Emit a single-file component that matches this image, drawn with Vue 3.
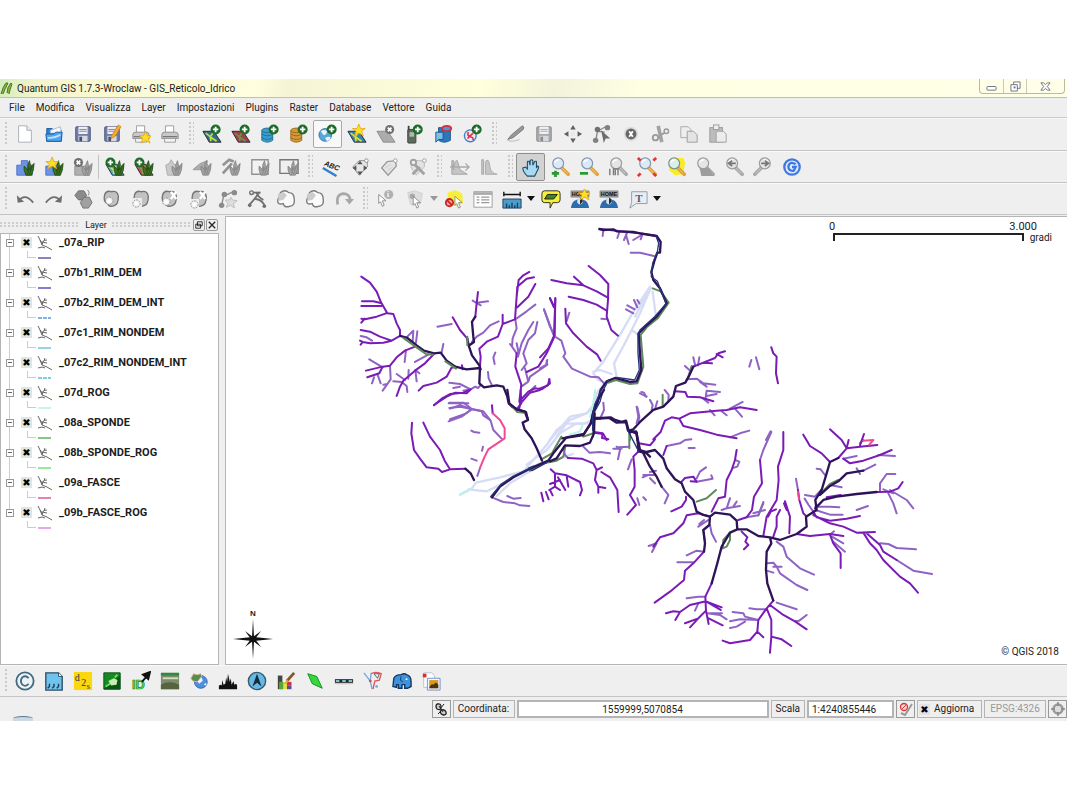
<script setup>
import { ref } from "vue";

const menus = [
  "File",
  "Modifica",
  "Visualizza",
  "Layer",
  "Impostazioni",
  "Plugins",
  "Raster",
  "Database",
  "Vettore",
  "Guida",
];

// shared pieces of the toolbar icons
const badge = (x, y, c = "#1d6b27") =>
  `<circle cx="${x}" cy="${y}" r="5.500" fill="${c}"/><path d="M${x - 3} ${y}h6M${x} ${y - 3}v6" stroke="#fff" stroke-width="2"/>`;
const cross = (x, y) =>
  `<circle cx="${x}" cy="${y}" r="5" fill="#6f6f6f"/><path d="M${x - 2} ${y - 2}l4 4M${x + 2} ${y - 2}l-4 4" stroke="#fff" stroke-width="2"/>`;
const star = (x, y) =>
  `<path transform="translate(${x} ${y})" d="M0-7L2-2 7-2 3 1 5 6 0 3-5 6-3 1-7-2-2-2z" fill="#ffdf20" stroke="#dfa010" stroke-width=".8"/>`;
const grass = (c, s) =>
  `<path d="M12 20Q9 14 10 10Q13 12 14 15Q13 8 16 4Q18 9 16 14Q18 9 21 7Q21 15 18 20z" fill="${c}" stroke="${s}" stroke-width=".8"/><path d="M14 19l1-8M16 19l3-9" stroke="${s}" stroke-width=".8"/>`;
const greenGrass = grass("#3c7420", "#1f4512");
const grayGrass = grass("#a2a2a2", "#7d7d7d");
const lens = (fill, rim, handle) =>
  `<path d="M13 12l7 7" stroke="${handle}" stroke-width="4" stroke-linecap="round"/><path d="M13 12l6 6" stroke="#fff" stroke-opacity=".4"/><circle cx="9" cy="7" r="6" fill="${fill}" stroke="${rim}" stroke-width="1.3"/><path d="M5 6q2-3 5-3" stroke="#fff" stroke-width="1.5" fill="none"/>`;
const blueLens = lens("#d9e9fa", "#8796a8", "#e3a53a");
const grayLens = lens("#e4e4e4", "#9c9c9c", "#a9a9a9");
const floppy = (body, edge) =>
  `<rect x="3" y="3" width="16" height="16" rx="1" fill="${body}" stroke="${edge}"/><rect x="6" y="3" width="10" height="8" fill="#eef0f4"/><path d="M7 6h8M7 8h8" stroke="${edge}" stroke-width=".7"/><rect x="6" y="13" width="10" height="6" fill="#d5d8e0"/><rect x="7" y="14" width="3" height="5" fill="${edge}"/>`;
const printer =
  '<path d="M6 9V2h9v7" fill="#fff" stroke="#999"/><path d="M2 12q0-3 3-3h12q3 0 3 3v4H2z" fill="#c9c9c9" stroke="#8a8a8a"/><path d="M3 14h16" stroke="#555"/><path d="M5 16h12v4H5z" fill="#f4f4f4" stroke="#9a9a9a"/>';
const database = (c, e) =>
  `<path d="M2 7v11q6 4 12 0V7" fill="${c}" stroke="${e}"/><ellipse cx="8" cy="7" rx="6" ry="2.500" fill="${c}" stroke="${e}"/><path d="M2 11q6 4 12 0M2 15q6 4 12 0" fill="none" stroke="${e}"/>`;
const raster = (c, l) =>
  `<path d="M1 8h12l8 12H8z" fill="${c}" stroke="#223"/><path d="M4 10l5 4 1 5M9 14l3-4M9 14l7 5" stroke="${l}" stroke-width="1.800" fill="none"/>`;
const blob = (x) =>
  `<path d="M${x} 6q2-5 7-3 7-2 8 5 0 9-4 10-6 3-8-2-5-2-3-10z" fill="#c2c2c2" stroke="#747474" stroke-width="1.500"/>`;
const spark = (x, y) =>
  `<circle cx="${x}" cy="${y}" r="4" fill="#f2f2f2" stroke="#8a8a8a" stroke-dasharray="2 1"/><path d="M${x - 2} ${y}h4M${x} ${y - 2}v4" stroke="#fff" stroke-width="2"/>`;
const cursor = (x, y, c = "#fff") =>
  `<path transform="translate(${x} ${y})" d="M0 0l8 7-4 0 2 5-2 1-2-5-2 2z" fill="${c}" stroke="#8a8a8a"/>`;
const home =
  '<path d="M1 2h20v7H1z" fill="#9a9a9a" stroke="#777" stroke-width=".6"/><text x="2" y="8" font-size="6" font-weight="700" font-family="Liberation Sans" fill="#111">HOME</text><path d="M1 21q1-8 6-9l4-3 4 3q5 1 6 9z" fill="#2d6dae"/><path d="M8 11q3-3 6 0v4q-3 4-6 0z" fill="#dbe3ec"/><path d="M11 10q3 0 3 4l-3 3z" fill="#25282c"/>';

const icons = {
  newProject:
    '<path d="M4 2h9l5 5v13H4z" fill="#fff" stroke="#a3acb8"/><path d="M13 2v5h5" fill="#e2e8ef" stroke="#a3acb8"/>',
  open: '<path d="M3 5h6l2 2h8v12H3z" fill="#2e7fd6" stroke="#1c5ba5"/><path d="M7 7l11-4 1 7H7z" fill="#f6f8fa" stroke="#a9b9cc"/><path d="M2 11h9l2-2h7l-1 10H3z" fill="#4ea4ef" stroke="#1c5ba5"/><path d="M4 15q7 1 14-3" stroke="#bfe2ff" stroke-width="2" fill="none"/>',
  save: floppy("#737fa8", "#454f75"),
  saveAs:
    floppy("#737fa8", "#454f75") +
    '<path d="M18 1l3 2-7 11-4 2 1-4z" fill="#f4a92e" stroke="#c97c12" stroke-width=".7"/>',
  composer: printer + star(16, 15),
  print: printer,
  addVector: raster("#2d6f86", "#c6dd4a") + badge(15, 6),
  addRaster: raster("#a23f46", "#6f8f50") + badge(15, 6),
  postgis: database("#3c9ccb", "#1d6c96") + badge(15, 6),
  spatialite: database("#d59a35", "#98651a") + badge(15, 6),
  wms:
    '<circle cx="8" cy="12" r="7" fill="#5ba6d8" stroke="#3577ad"/><path d="M3 8q4-3 7 0-1 5-4 4zM8 15q5-2 6 0-2 5-5 3z" fill="#e9f3f8"/>' +
    badge(15, 6),
  newShape: raster("#3a86a6", "#d5df35") + star(13, 7),
  removeLayer:
    '<path d="M1 8h12l8 12H8z" fill="#acacac" stroke="#8a8a8a"/>' + cross(15, 6),
  gps:
    '<rect x="3" y="6" width="9" height="15" rx="1" fill="#5d6a5e" stroke="#3d463e"/><rect x="5" y="9" width="5" height="5" fill="#a8c0a6"/><path d="M4 2v5" stroke="#3d463e" stroke-width="2"/>' +
    badge(14, 6),
  oracle:
    '<path d="M5 4v14q6 4 13 0V4z" fill="#2a78bd" stroke="#17508a"/><ellipse cx="14" cy="5" rx="5" ry="3" fill="#4b98d6" stroke="#d22e3b" stroke-width="2"/><path d="M2 9h8v8H5l-3 3z" fill="#7fc0ea" stroke="#17508a"/>',
  wfs:
    '<circle cx="8" cy="13" r="6.500" fill="#f3e6ee" stroke="#3e7fd0" stroke-width="1.500"/><path d="M5 16l6-6M6 9q-2 4 2 5t3 4" stroke="#d8344c" stroke-width="1.800" fill="none"/>' +
    badge(15, 6),
  pencil:
    '<path d="M19 2q3 1 1 4L9 15l-6 2 4-5z" fill="#989898" stroke="#777"/><path d="M3 18q6 2 13-1" stroke="#c8c8c8" stroke-width="1.500" fill="none"/>',
  saveEdits: floppy("#a9a9a9", "#8c8c8c"),
  move: '<path d="M11 1l3 5H8zM11 21l3-5H8zM1 11l5-3v6zM21 11l-5-3v6z" fill="#606060"/><path d="M9 9h4v4H9z" fill="#e8e8e8"/>',
  node: '<path d="M4 19L6 8l9-5M6 8l8 1" stroke="#8b8b8b" stroke-width="1.500" fill="none"/><circle cx="6" cy="6" r="3" fill="#707070"/><circle cx="17" cy="4" r="3" fill="#808080"/><circle cx="4" cy="18" r="3" fill="#808080"/><path d="M10 7l10 9-5 0-2 5z" fill="#6c6c6c"/>',
  deleteSel:
    '<circle cx="11" cy="11" r="8" fill="#ddd"/><circle cx="11" cy="11" r="6" fill="#666"/><path d="M9 8l4 6M13 8l-4 6" stroke="#fff" stroke-width="2"/>',
  cut: '<path d="M9 2l4 18" stroke="#a2a2a2" stroke-width="4"/><path d="M12 12l5-3" stroke="#9a9a9a" stroke-width="2"/><circle cx="18" cy="8" r="2.500" fill="#eee" stroke="#9a9a9a" stroke-width="1.500"/><circle cx="6" cy="15" r="3" fill="#eee" stroke="#9a9a9a" stroke-width="2"/>',
  copy: '<path d="M2 3h8l3 3v9H2z" fill="#eee" stroke="#a6a6a6"/><path d="M9 8h7l4 4v8H9z" fill="#e3e3e3" stroke="#9a9a9a"/>',
  paste:
    '<rect x="2" y="4" width="14" height="16" fill="#bcbcbc" stroke="#9a9a9a"/><rect x="6" y="1" width="6" height="5" fill="#eee" stroke="#9a9a9a"/><path d="M9 8h8l3 3v9H9z" fill="#ececec" stroke="#a0a0a0"/>',

  folder:
    '<path d="M2 9h5V4h7v5h5v11H2z" fill="#6d93e6" stroke="#4b6fc4"/>' + greenGrass,
  folderStar:
    '<path d="M2 10h16v10H2z" fill="#6d93e6" stroke="#4b6fc4"/>' + greenGrass + star(9, 7),
  folderClose:
    '<path d="M2 10h16v10H2z" fill="#b0b0b0" stroke="#909090"/>' + grayGrass + cross(6, 6),
  grassVector: raster("#47a8c6", "#e0e34d") + greenGrass + badge(6, 6),
  grassRaster: raster("#b85158", "#8c9a50") + greenGrass + badge(6, 6),
  grassNew:
    '<path d="M3 9l4-2 2-4 3 5 5 1v11H5z" fill="#c9c9c9" stroke="#aaa"/>' + grayGrass,
  grassEdit: '<path d="M1 14Q8 6 17 4l-4 10z" fill="#acacac" stroke="#999"/>' + grayGrass,
  grassTools:
    '<path d="M2 9l7-6 5 2M2 18L12 7" fill="none" stroke="#939393" stroke-width="3"/>' + grayGrass,
  grassRegion:
    '<path d="M2 3h18v16H2z" fill="#f2f2f2" stroke="#929292" stroke-width="1.500"/>' + grayGrass,
  grassRegionEdit:
    '<path d="M1 3h20v15H1z" fill="#efefef" stroke="#777" stroke-width="1.500"/>' + grayGrass,
  abc: '<path d="M2 12l15 9" stroke="#2d7fd2" stroke-width="2.500"/><text x="3" y="9" transform="rotate(22 3 9)" font-size="8" font-style="italic" font-weight="700" font-family="Liberation Sans" fill="#222">ABC</text>',
  labelMove:
    '<path d="M3 11l7-7h9v7l-9 9z" fill="#e6e6e6" stroke="#8a8a8a"/><path d="M11 4l3 4H8zM11 20l3-4H8zM3 12l4-3v6zM19 12l-4-3v6z" fill="#555"/><circle cx="18" cy="4" r="2" fill="#fff" stroke="#888"/>',
  labelRotate:
    '<path d="M3 12l6-7 9-1 1 6-9 10z" fill="#e4e4e4" stroke="#999" stroke-width="1.500"/><path d="M7 12l6-4M9 15l6-4" stroke="#ccc"/><circle cx="18" cy="4" r="2" fill="#fff" stroke="#999"/>',
  labelTools:
    '<path d="M3 11l6-7h9v7l-9 9z" fill="#e2e2e2" stroke="#bbb"/><path d="M7 8l11 11M5 19l8-8" fill="none" stroke="#a2a2a2" stroke-width="3"/><circle cx="6" cy="6" r="3" fill="#eee" stroke="#a2a2a2" stroke-width="2"/><circle cx="18" cy="4" r="2" fill="#fff" stroke="#999"/>',
  histStretch:
    '<path d="M2 19V4h2v8q2-10 4-8l3 10 8 5z" fill="#c5c5c5" stroke="#a3a3a3"/><path d="M1 11h20M17 7l4 4-4 4M5 8l-4 3 4 3" stroke="#aaa" stroke-width="1.500" fill="none"/>',
  histFull:
    '<path d="M3 19V3h2v16zM7 19V5q4-5 5 6 1 7 8 8z" fill="#c5c5c5" stroke="#a8a8a8"/>',
  pan: '<path d="M7 21q-5-5-5-9l3-1 2 2V6q0-2 2-1l1 4V4q2-2 3 0v5l2-4q2-1 2 1v6l1-2q2 0 1 3l-4 8z" fill="#a9d9f2" stroke="#234b66" stroke-width="1.200"/>',
  zoomIn: blueLens + '<path d="M6 15v7M2 18h8" stroke="#2b9a33" stroke-width="3"/>',
  zoomOut: blueLens + '<path d="M1 18h9" stroke="#2b9a33" stroke-width="3"/>',
  zoomNative: grayLens + '<path d="M2 20v-7M6 20v-7h5v7M8 14v6" stroke="#777" stroke-width="1.500" fill="none"/>',
  zoomFull:
    blueLens +
    '<path d="M1 1l3 3M21 1l-3 3M1 21l3-3M21 21l-3-3" stroke="#e33434" stroke-width="3"/>',
  zoomSel:
    '<path d="M8 1h11l2 5-2 13-9 1-7-6z" fill="#f7ec27"/>' +
    lens("#dbeee8", "#7d9286", "#dfa034"),
  zoomLayer: grayLens + '<path d="M5 12h10l6 9H7z" fill="#9d9d9d"/>',
  zoomLast: grayLens + '<path d="M13 7H6M9 4L5 7l4 3" stroke="#777" stroke-width="2" fill="none"/>',
  zoomNext:
    '<g transform="matrix(-1 0 0 1 22 0)">' + grayLens + '</g><path d="M9 7h7M13 4l4 3-4 3" stroke="#777" stroke-width="2" fill="none"/>',
  refresh:
    '<circle cx="11" cy="11" r="8.500" fill="#dfe9fb" stroke="#4078e0" stroke-width="2.500"/><path d="M15 8q-6-4-8 2 0 6 6 5l2-4h-4" fill="none" stroke="#3d77df" stroke-width="2.500"/>',

  undo: '<path d="M4 13q7-9 16 2" fill="none" stroke="#6e6e6e" stroke-width="2"/><path d="M2 7l1 8 7-1z" fill="#6e6e6e"/>',
  redo: '<path d="M18 13Q11 4 2 15" fill="none" stroke="#6e6e6e" stroke-width="2"/><path d="M20 7l-1 8-7-1z" fill="#6e6e6e"/>',
  simplify:
    '<path d="M2 7l4-5h6l3 5-3 5H6z" fill="#8b8b8b" stroke="#707070"/><path d="M8 15l4-6h6l3 6-4 6h-6z" fill="#a0a0a0" stroke="#707070"/><path d="M16 1q3 2 1 6" stroke="#888" fill="none"/>',
  addRing: blob(3) + spark(8, 13),
  addPart: blob(4) + '<path d="M0 10h12v12H0z" fill="#efefef"/>' + spark(6, 16),
  delRing: blob(3) + spark(7, 14) + '<path d="M12 3l6 8M18 3l-6 8" stroke="#fff" stroke-width="2.500"/>',
  delPart: blob(4) + '<path d="M0 11h11v11H0z" fill="#efefef"/>' + spark(6, 17) + '<path d="M12 3l6 8M18 3l-6 8" stroke="#fff" stroke-width="2.500"/>',
  reshape:
    '<path d="M4 18L6 8l11-5" stroke="#8b8b8b" stroke-width="1.500" fill="none"/><circle cx="7" cy="6" r="3" fill="#8b8b8b"/><circle cx="18" cy="4" r="3" fill="#8b8b8b"/><circle cx="4" cy="18" r="3" fill="#8b8b8b"/><path d="M14 9l2 3 5 1-4 3 1 5-4-3-5 2 2-4-3-4h5z" fill="#ddd" stroke="#bbb"/>',
  split:
    '<circle cx="5" cy="4" r="2" fill="none" stroke="#707070" stroke-width="1.500"/><path d="M7 4h8M10 3q2 6 8 9M14 3Q8 12 2 18M9 11q7 0 11 8" stroke="#707070" stroke-width="2" fill="none"/><circle cx="3" cy="18" r="2" fill="#707070"/><circle cx="19" cy="19" r="2" fill="#707070"/>',
  merge:
    '<path d="M5 4q5-4 9 0 6 0 6 7 1 8-5 8-6 2-7-3-7 2-6-4z" fill="#fafafa" stroke="#7a7a7a" stroke-width="1.500"/><path d="M2 6l6-3 4 4-4 5-5 1z" fill="#ccc"/>',
  rotate:
    '<path d="M4 17Q2 6 10 5q7 0 8 7" fill="none" stroke="#a8a8a8" stroke-width="3"/><path d="M12 11h10l-5 6z" fill="#a8a8a8"/>',
  identify:
    cursor(3, 6) +
    '<circle cx="14" cy="6" r="5" fill="#b0b0b0"/><text x="12" y="9" font-size="8" font-weight="700" font-family="Liberation Serif" fill="#fff">i</text>',
  select:
    '<path d="M3 4l8-2 8 3-2 11-11 1z" fill="#dedede" stroke="#d0d0d0"/><circle cx="8" cy="8" r="3" fill="#aaa"/>' +
    cursor(9, 8),
  deselect:
    '<path d="M4 4l8-3 8 4 1 10-7 4-10-3z" fill="#f7ef3a"/>' +
    cursor(12, 8) +
    '<circle cx="6" cy="15" r="4" fill="#f4b0a0" stroke="#cf2020" stroke-width="2"/><path d="M3 12l6 6" stroke="#cf2020" stroke-width="2"/>',
  attributes:
    '<rect x="1" y="3" width="20" height="17" fill="#fff" stroke="#999"/><path d="M1 5h20" stroke="#aaa" stroke-width="3"/><path d="M4 9h3M9 9h9M4 12h3M9 12h9M4 15h3M9 15h9" stroke="#999" stroke-width="1.500"/>',
  measure:
    '<path d="M2 3v5M20 3v5M2 6h18" stroke="#111" stroke-width="1.500"/><path d="M1 11h20v10H1z" fill="#4e9cc9" stroke="#193c58"/><path d="M5 21v-5M8 21v-3M11 21v-6M14 21v-3M17 21v-6" stroke="#153f63" stroke-width="1.500"/>',
  tips: '<path d="M4 2h14q3 0 3 3v7q0 3-3 3h-5l-3 6v-6H4q-3 0-3-3V5q0-3 3-3z" fill="#f5ef3c" stroke="#222"/><path d="M7 6h11l-4 5H4z" fill="#46821f" stroke="#1b1b1b"/>',
  newBookmark: home + star(16, 6),
  bookmarks: home,
  annotation:
    '<path d="M4 3h17v13H9l-7 5 2-6z" fill="#e7edf3" stroke="#8d98a3"/><text x="8" y="14" font-size="12" font-weight="700" font-family="Liberation Serif" fill="#5a646e">T</text>',

  copyright:
    '<circle cx="11" cy="11" r="9.500" fill="#eef3f6" stroke="#436a80" stroke-width="2"/><path d="M15 8q-3-4-7-1-3 4 0 8 4 3 7-1" fill="none" stroke="#436a80" stroke-width="2"/>',
  textPlugin:
    '<path d="M2 2h14l4 4v15H2z" fill="#6fc4ee" stroke="#2f4c63" stroke-width="1.500"/><path d="M16 2v4h4" fill="#fff" stroke="#2f4c63"/><path d="M6 14v3l-2 2M11 14v3l-2 2M16 14v3l-2 2" stroke="#1c3a55" fill="none" stroke-width="1.500"/>',
  dxf: '<path d="M1 1h20v20H1z" fill="#f9d810"/><text x="2" y="11" font-size="11" font-family="Liberation Serif" fill="#333">d</text><text x="9" y="16" font-size="11" font-family="Liberation Serif" fill="#333">2</text><text x="15" y="20" font-size="9" font-family="Liberation Serif" fill="#333">s</text>',
  evis:
    '<path d="M2 2h18v18H2z" fill="#158a22" stroke="#064a12"/><path d="M2 20L20 5v15z" fill="#0a5617"/><path d="M7 11l6-3 4 2-1 5-6 1z" fill="#c9ecb0"/><path d="M14 7l3-3M4 17l5-3" stroke="#6be35a" stroke-width="2"/>',
  hd: '<text x="1" y="20" font-size="14" font-weight="700" font-family="Liberation Sans" fill="#6ee565" stroke="#158a1a" stroke-width=".8">ID</text><path d="M12 12l6-7M13 4l8-3-2 8z" fill="#111" stroke="#111" stroke-width="2"/>',
  field:
    '<path d="M1 2h20v18H1z" fill="#7d8b6c"/><path d="M1 2h20v3H1z" fill="#2e8b3c"/><path d="M3 7h17v2H3z" fill="#cfe0c4"/><path d="M1 15q9-5 20 0v5H1z" fill="#55633f"/>',
  globe:
    '<circle cx="13" cy="12" r="7" fill="#4f8fe0" stroke="#3763a8"/><path d="M11 6q4 1 4 5l-4 3-2-4zM16 15l3-2v3z" fill="#eaf6ff"/><path d="M2 8l3-5 4 1 4-1 1 3-5 6-5-1z" fill="#5b8a56" stroke="#d9c29a"/>',
  histogram:
    '<path d="M1 20v-4l2-1 1 1 1-6 1 5 2-1 1-7 1 5 1-9 2 9 1-4 1 7 2-4 1 4 2-1 1 2v4z" fill="#111"/>',
  north:
    '<circle cx="11" cy="11" r="9.500" fill="#68b9e2" stroke="#33586f" stroke-width="1.500"/><path d="M11 3l5 14-5-4-5 4z" fill="#132c3e"/>',
  style:
    '<path d="M2 5h5v15H2z" fill="#444"/><path d="M4 12h13v8H4z" fill="#e9e142"/><path d="M4 12h4v8H4z" fill="#57a83c"/><path d="M12 12h5v4h-5z" fill="#cf3040"/><path d="M12 16h5v4h-5z" fill="#604a98"/><path d="M20 2l-8 9" stroke="#8a5426" stroke-width="3"/><path d="M13 9l-5 6 6-3z" fill="#e09a50"/>',
  polygon:
    '<path d="M3 3l10 3 6 13-11-5z" fill="#34d83a" stroke="#128a1a"/>',
  scalebar:
    '<path d="M1 9h20v4H1z" fill="#222"/><path d="M2 10h4v2H2zM9 10h4v2H9zM16 10h4v2h-4z" fill="#7fc0cf"/><path d="M1 14h20" stroke="#bbb"/>',
  roadgraph:
    '<path d="M1 2l7 9 2 9M9 2l-1 9" stroke="#79a8e0" stroke-width="1.500" fill="none"/><path d="M9 3q4-3 11 0l-2 7-5 1-2 9" stroke="#de5560" stroke-width="1.500" fill="none"/><path d="M12 3h6l-2 5z" fill="none" stroke="#555"/><circle cx="8" cy="11" r="1.500" fill="#d44"/><circle cx="15" cy="17" r="1.500" fill="#79a8e0"/>',
  postgres:
    '<path d="M1 17l1-9q2-4 8-4 4-2 6 0 5 1 5 8v5l-4 2h-3v-4h-3v4H7v-4H5v3z" fill="#3f93dc" stroke="#12365e" stroke-width="1.500"/><circle cx="16" cy="9" r="1" fill="#fff"/><path d="M10 6q-2 5 2 6" fill="none" stroke="#12365e"/>',
  imagePlugin:
    '<path d="M3 2h9l3 3v13H3z" fill="#fff" stroke="#b5bdd0"/><path d="M2 3h4v4H2z" fill="#e02a2a"/><path d="M7 8h14v13H7z" fill="#f2f5fb" stroke="#6b8bd0"/><path d="M9 10h10v9H9z" fill="#d99a1c"/><path d="M9 19q2-6 5-4 2-4 5 0v4z" fill="#4a3510"/>',
};

const toolbars = [
  [
    ["newProject", "open", "save", "saveAs", "composer", "print"],
    ["addVector", "addRaster", "postgis", "spatialite", "wms", "newShape", "removeLayer", "gps", "oracle", "wfs"],
    ["pencil", "saveEdits", "move", "node", "deleteSel", "cut", "copy", "paste"],
  ],
  [
    ["folder", "folderStar", "folderClose", "|", "grassVector", "grassRaster", "grassNew", "grassEdit", "grassTools", "grassRegion", "grassRegionEdit"],
    ["abc", "labelMove", "labelRotate", "labelTools"],
    ["histStretch", "histFull"],
    ["pan", "zoomIn", "zoomOut", "zoomNative", "zoomFull", "zoomSel", "zoomLayer", "zoomLast", "zoomNext", "refresh"],
  ],
  [
    ["undo", "redo", "simplify", "addRing", "addPart", "delRing", "delPart", "reshape", "split", "merge", "merge", "rotate"],
    ["identify", "select", "v", "deselect", "attributes", "measure", "V", "tips", "newBookmark", "bookmarks", "annotation", "V"],
  ],
];

const pluginTools = [
  "copyright", "textPlugin", "dxf", "evis", "hd", "field", "globe", "histogram",
  "north", "style", "polygon", "scalebar", "roadgraph", "postgres", "imagePlugin",
];

const layers = ref([
  { name: "_07a_RIP", color: "#6a5aa8", on: true },
  { name: "_07b1_RIM_DEM", color: "#5a52c0", on: true },
  { name: "_07b2_RIM_DEM_INT", color: "#5a96e0", dash: "4 1", on: true },
  { name: "_07c1_RIM_NONDEM", color: "#72c4e6", on: true },
  { name: "_07c2_RIM_NONDEM_INT", color: "#55bfdc", dash: "4 1", on: true },
  { name: "_07d_ROG", color: "#b5f0ea", on: true },
  { name: "_08a_SPONDE", color: "#58b858", on: true },
  { name: "_08b_SPONDE_ROG", color: "#74e074", on: true },
  { name: "_09a_FASCE", color: "#d85a98", on: true },
  { name: "_09b_FASCE_ROG", color: "#dc8ce0", on: true },
]);

const coordinate = ref("1559999,5070854");
const scale = ref("1:4240855446");
const render = ref(true);

// river network, one sheet per survey area, three units to a pixel
const sheets = [
  {
    x: 350,
    y: 220,
    lines: {
      minor:
        "M32 348L50 352 66 362M172 350L188 334M188 364L190 332M198 368L202 334M58 418L98 442M66 490L72 472M92 490L82 462M120 437L122 478 98 512M112 492L100 494M168 390L164 426M195 426L235 404M275 398L280 372M130 484L155 486 170 498 172 516M140 462L165 480M175 476L176 450M200 484L196 450 208 460M262 320L305 312M380 248L414 244M368 242L392 256M366 366L380 350 400 338 420 316 446 304M496 298L530 274 556 254M496 298L500 325 488 355 486 380 500 400M504 410L515 370 535 330 550 306M515 450L530 430 520 400 535 360 555 340 562 306M500 370L506 400M480 372L490 385M582 268L600 320 614 348M514 500L535 485 540 470 592 434 590 422M535 485L525 445M540 514L556 498M436 398L430 412 434 432M414 456L416 475 426 496M298 488L330 492 362 508 340 512M310 504L330 500M362 508L376 500 384 504 392 496M296 550L355 550M300 566L330 556 365 568 395 574 400 586 420 600M300 598L345 582 365 568",
      main: "M34 170L60 188 80 215 93 247 112 280 130 282 140 310 150 330 150 348M36 244H70L92 249M34 258H94M34 296L45 298 80 290 108 280M34 308L44 296M32 330L60 335 90 350 125 362 150 348M30 362L38 366 60 370 100 368 125 362M32 374L38 366M195 380L165 392 140 412 120 437 98 440 48 452M98 440L88 460 52 472M252 402L225 430 195 452 160 482 150 500 140 528M206 512L220 498 260 488 290 470 304 444 316 440M338 448L336 436M308 292L330 330 352 356M376 290L380 250 384 216M458 284L458 312 444 350 412 364 388 386 392 410 390 440M458 312L495 298 500 230 506 180 520 166 538 156M500 230L502 200 530 176 552 172M502 262L535 230 556 192M500 400L496 440 514 494 508 545M600 236L612 262M616 234L614 348 590 400 565 440 530 456M508 565L512 540 535 515 555 505 575 508 600 490 598 478M252 555L290 530 316 518 350 520 362 508",
      dark: "M150 348L172 354 200 376 222 392 252 400 272 398 290 422 316 440 350 448 390 444M352 356L356 376 366 406 388 436 392 448M358 376L372 366 370 350 366 306 376 290M390 444L388 490 402 502 440 496 460 500 472 530 476 550 486 560 506 570 524 574 534 600",
      bank: "M160 354L205 386 228 402 250 404M352 350L352 376M286 424L318 446",
    },
  },
  {
    x: 540,
    y: 220,
    lines: {
      pale: "M330 200L280 275 240 345 190 425 160 460M332 205L300 280 275 330 252 375 222 430 230 470M275 330L292 342M338 215L348 290M160 460L175 480 195 488 170 520 165 550 140 580 90 590 60 625 30 660M156 600L130 612 80 610 50 650M160 455L180 450 215 462M325 210L285 290",
      bank: "M338 205L362 214 386 248 354 294 322 320 302 345 310 440 292 490 270 492 228 480 206 488M160 580L160 640 130 650M368 556L368 524M270 636V660M455 438L445 470",
      minor:
        "M190 30L188 48M238 36L232 54M262 36L252 60M258 44L266 72M280 60L300 48 308 42M302 58L308 42M272 98L300 98 342 108M184 296L202 298M88 278L80 304M42 348L64 362 76 400 70 410 96 446 150 470 176 472 192 490M12 268L42 348M0 445L18 435 22 420M180 597L192 570 190 548M435 438L448 450M460 412L466 438M478 412L474 436M295 606L298 590 292 562M335 570L338 555 330 540M345 568L352 544M385 545L386 525 374 510M304 516L312 518 318 530M440 478L470 476 490 490 526 494M480 486L500 500M496 540L500 512 540 516M500 528L530 522M490 536L505 548M510 570L524 586M545 574L560 586M570 566L608 546M585 566L606 590M570 652L600 640 628 632M678 660L692 634M628 440L634 420M648 412L658 448M258 268L280 280M262 256L284 268M282 240L292 262M292 240L298 250",
      main: "M34 180L80 190 130 196 170 214 205 234M102 170L130 196M146 138L180 165 205 192 204 240 200 290 214 330 234 347M86 230L130 240 170 254 200 272M76 266L78 310 100 340 140 380 172 404 182 422M0 412L25 385 42 348M30 234L42 260M46 236L42 348M0 505L24 496 28 478M460 440L490 428 516 430M460 440L525 414 535 400 555 394M530 402L548 412M340 658L362 636 375 602 395 592 418 596 450 580 490 576 530 572 560 570 600 562 650 570M418 596L430 618 480 630 530 644 590 655M694 382L700 400 710 410 708 460 714 490M162 638L190 642 200 660M404 514L436 516 442 530 480 532 520 544M180 27L300 40 350 48",
      dark: "M178 27L190 30 220 28 230 34 280 36 300 40 350 48 362 66 360 98 352 98 344 120 334 156 340 180 360 205 380 250 350 290 318 318 296 340 300 400 304 450 290 484 270 486 225 474 200 484 182 510 172 550 158 575 156 605 130 645 66 655M162 597L212 592 225 600 245 606 258 602 266 632 290 640 292 660M266 632L280 628 300 606 340 570 370 560 400 530 408 498 436 488 446 470 460 440",
      channel:
        "M348 48L356 70 352 96 338 130 334 170 352 184 374 240 378 252 344 290 300 330 294 342 294 400 298 450 284 480 230 472M206 480L190 510 180 545 164 575 160 600 160 650",
    },
  },
  {
    x: 400,
    y: 390,
    lines: {
      pale: "M180 314L215 296 228 278 300 262 370 244 400 210 440 165 470 120 510 90 560 70 580 50M205 298L260 304 310 280 380 240M370 244L420 220 470 210 518 192M290 318L330 280 390 244M380 224L440 180 480 130 530 100 565 100",
      aqua: "M180 314L210 298M510 134L540 124 550 100M586 0L578 50 570 80",
      bank: "M496 170L490 200 470 212 430 220 390 242M484 140L456 190 424 208M328 40L352 66 372 68M688 130V175",
      minor:
        "M148 38L190 38 212 54M148 54L180 50 212 56 250 64 272 92 280 120 305 146M146 94L185 80 212 60M240 234L232 258M214 206L230 212M214 122L222 126 238 128M246 182L249 170M550 170L568 188 600 186 630 190M640 176L665 176M654 208L660 180 650 170M655 172L688 170M684 238L695 208M712 325L718 345M730 322L738 330M276 322L310 336 345 340 360 346 388 348M322 318L340 326 362 324M490 180L496 196 504 204M710 50L715 80 710 100M728 262L748 254M720 10L740 20",
      main: "M102 46L125 26 150 12 190 8 210 0M36 98L34 130 42 180 60 206 80 232 115 236 126 246 150 238M70 98L90 140 120 180 134 212 150 238 196 236M362 0L364 40 350 58M362 40L390 8 420 0M582 126L608 130 606 144 625 148M504 204L545 206 580 220 590 240 585 270 595 290 595 308M595 290L616 294M590 240L606 232M604 246L630 262 652 300 656 366M716 184L700 200 704 240 704 290 690 315 708 345 682 374M276 46L278 70M452 238L465 250 500 256 540 276 546 300 540 316M465 250L465 290 448 300M465 290L480 300M450 282L480 270M474 262L496 300M500 258L505 290M424 308L430 334M438 306L446 328M450 300L458 316",
      flood: "M278 70L300 90 314 115 314 145 265 178 254 200 240 234",
      dark: "M612 0L590 36 580 66 572 100 552 132 500 142 480 165 460 190 445 212 390 236 340 262 300 290 276 322M322 0L328 40 350 58 378 66 384 90 368 98 374 118 395 145 410 175 426 212M582 84L628 84 650 98 678 96 684 122 710 128 716 184 740 190 750 200M196 236L212 250 222 270M584 70L582 130 570 158 540 168 495 166 470 205 450 214",
      channel:
        "M604 0L584 44 578 80 578 120M440 218L396 242 386 234 400 228M396 232L340 258 304 282 272 320M716 184L684 122",
    },
  },
  {
    x: 630,
    y: 400,
    lines: {
      bank: "M300 398L280 420 278 445 290 440 300 420 300 398M200 305L230 295 258 270M575 278L600 252 625 240M220 390L224 420M690 130L700 120M385 346L400 310",
      minor:
        "M640 176L680 168M560 206L572 208 585 225M600 255L635 262M680 205L690 222M575 268L555 290 525 285M524 296L536 315 550 335M556 320L600 320 628 322M556 330L600 344 638 344M680 330L714 318M780 270L830 300 850 325M775 280L790 310 800 340M750 276L750 250 770 222 796 222M760 268L790 280M606 410L640 430M610 425L645 455M600 404L612 394M498 236L504 270M350 352L385 346 400 306M370 340L405 330M315 180L328 185 322 200 308 204M275 330L290 325 330 318M290 325L300 295M310 320L320 305M95 260L115 285 104 310M40 225L75 225M60 235L75 250M60 216L78 212M110 138L150 130 165 120 184 118M176 144H194M56 438L80 430 66 456M222 455L200 452 170 466M190 487H142M240 375L245 400 258 425M205 380L235 360M208 372L222 360M226 590L205 590 170 595M205 610L195 632M232 640L270 645 290 658M240 640L276 640M410 628L380 628 358 625M385 660L345 650 340 640 308 636M385 660L330 658 300 664M345 665L320 680 300 684M412 490L430 488 440 500 450 520 500 555 532 570M430 500L455 500M410 512L430 518M440 425L460 440 470 470 510 505 552 524M750 430L775 432 800 444 858 448M800 480L850 512 906 522M495 664L508 662 530 645M440 608L500 628M424 96L400 150 390 180M745 165L795 168M200 235L210 215 228 202M200 245L248 236 244 226M700 212L736 194",
      main: "M625 174L650 145 690 140 742 135M650 145L656 120M650 145L635 120 600 88M520 104L540 138 575 160 600 186M690 136L702 102M640 176L660 190 700 182 750 165 785 150M740 276L780 275 805 265 818 246M590 292L632 285M550 335L560 352 600 362 650 356 690 348M550 345L600 370 640 380 680 398 735 396M700 398L720 430 740 450 760 480 810 530 840 550 864 578M710 400L750 435 760 455 800 480M500 402L540 408 600 402 640 408M600 404L610 430 632 460 632 504M504 270L508 300 520 340 530 350M400 408L410 350 440 300 446 240 444 200 460 150 460 96M390 180L396 250 372 290 366 330 350 352 325 360M430 410L440 380 440 350 450 330M414 350L422 335 438 328M465 304L480 350 478 400M462 310L470 330M245 335L265 295 285 290 290 240 305 210 315 180 320 150M155 245L165 234 190 230 200 245 182 244M168 290L168 300 155 320 124 334M100 165L110 138M26 130L60 136 75 118M240 350L205 340 170 346 160 370 130 400 90 412 70 440M222 455L190 490 165 512 162 540 120 575 74 608M245 550L226 590 228 632 236 672M108 640L130 634 150 636 180 615 228 604 275 622M150 636L136 660M228 632L205 655 165 670M205 655L180 682M228 604L272 630M236 655L278 676M335 395L352 412 346 425 355 435 342 448M430 602L410 625 385 660 382 695 360 720 300 730 278 722M410 625L424 660 424 710 420 758M424 710L455 718 484 738M382 695L400 712M420 615L460 645 495 664 530 688",
      flood: "M700 122L730 120 718 134M504 275L507 298",
      dark: "M0 96L18 94 26 130 30 150 50 156 75 150 100 176 110 205 135 238 155 250 165 275 190 300 200 335 220 345 240 350 255 338 300 344 320 362 322 388 350 388 385 408 420 412 450 420 500 402 530 380 528 350 560 330 556 300 575 270 590 220 600 186 625 174M556 325L580 300 620 290 680 282 740 276M570 285L600 258 625 244 650 220 700 212M40 160L60 200 80 230 95 260M240 350L238 375 220 390 225 430 222 455M322 388L300 398 275 440 262 490 245 550M420 412L424 430 410 455 408 510 412 550 430 602",
    },
  },
];
</script>

<template>
  <div class="window">
    <header class="titlebar">
      <svg class="app-icon" viewBox="0 0 14 14">
        <path d="M1 13Q3 5 6 2l2 0Q5 8 3 13M7 12Q7 6 11 2l1 1Q10 8 9 13" fill="#8ab53f" stroke="#4b7a22" />
      </svg>
      <h1>Quantum GIS 1.7.3-Wroclaw - GIS_Reticolo_Idrico</h1>
      <div class="controls">
        <button aria-label="minimize">
          <svg viewBox="0 0 12 12"><rect x="1" y="6" width="10" height="4" rx="1" fill="#fff" stroke="#666e7d" /></svg>
        </button>
        <button aria-label="restore">
          <svg viewBox="0 0 12 12">
            <path d="M4 1h7v7H4z" fill="#fff" stroke="#666e7d" />
            <path d="M1 4h7v7H1z" fill="#fff" stroke="#666e7d" />
            <path d="M4 6h2v2H4z" fill="#666e7d" />
          </svg>
        </button>
        <button class="wide" aria-label="close">
          <svg viewBox="0 0 12 12">
            <path d="M1 2h3l2 2 2-2h3L8 6l3 4H8L6 8l-2 2H1l3-4z" fill="#fff" stroke="#666e7d" />
          </svg>
        </button>
      </div>
    </header>

    <nav class="menubar">
      <button v-for="menu in menus" :key="menu">{{ menu }}</button>
    </nav>

    <div v-for="(bar, b) in toolbars" :key="b" class="toolbar">
      <div v-for="(group, g) in bar" :key="g" class="group">
        <span class="handle"></span>
        <template v-for="(tool, t) in group" :key="t">
          <span v-if="tool === '|'" class="separator"></span>
          <button v-else-if="tool === 'v' || tool === 'V'" class="arrow" :class="{ off: tool === 'v' }" aria-label="menu"></button>
          <button v-else class="tool" :class="{ pressed: tool === 'pan', hover: tool === 'wms' }" :aria-label="tool">
            <svg viewBox="0 0 22 22" v-html="icons[tool]"></svg>
          </button>
        </template>
      </div>
    </div>

    <main class="workspace">
      <aside class="dock">
        <div class="dock-title">
          <span class="grip"></span>
          <h2>Layer</h2>
          <span class="grip"></span>
          <button aria-label="float">
            <svg viewBox="0 0 10 10"><path d="M3 1h6v5H3zM1 4h6v5H1z" fill="#fff" stroke="#222" stroke-width="1.2" /></svg>
          </button>
          <button aria-label="close panel">
            <svg viewBox="0 0 10 10"><path d="M1 1l8 8M9 1L1 9" stroke="#222" stroke-width="1.6" /></svg>
          </button>
        </div>
        <ul class="tree">
          <li v-for="layer in layers" :key="layer.name">
            <label class="layer">
              <span class="expander"></span>
              <input v-model="layer.on" type="checkbox" />
              <svg class="line-icon" viewBox="0 0 16 16">
                <path d="M1 1l2 4 2 5 5 2 5 3M3 5l3 4M5 10q0-5 5-5M5 7l5 1M8 3L7 6M1 13l4-1 3 1" fill="none" stroke="#666" />
              </svg>
              <span>{{ layer.name }}</span>
            </label>
            <div class="symbol">
              <span class="elbow"></span>
              <svg viewBox="0 0 13 2">
                <path d="M0 1h13" :stroke="layer.color" stroke-width="1.5" :stroke-dasharray="layer.dash" />
              </svg>
            </div>
          </li>
        </ul>
      </aside>

      <section class="canvas">
        <svg class="map" viewBox="226 217 841 447">
          <g v-for="(sheet, s) in sheets" :key="s" :transform="`translate(${sheet.x} ${sheet.y}) scale(.3333)`">
            <path v-for="(d, kind) in sheet.lines" :key="kind" :class="kind" :d="d" />
          </g>
        </svg>
        <div class="scalebar">
          <div class="numbers"><span>0</span><span>3.000</span></div>
          <div class="rule"></div>
          <span class="unit">gradi</span>
        </div>
        <div class="north">
          <span>N</span>
          <svg viewBox="0 0 40 40">
            <path d="M20 0l1 18 19 2-19 2-1 18-1-18-19-2 19-2z" fill="#111" />
            <path d="M12 12l8 6 8-6-6 8 6 8-8-6-8 6 6-8z" fill="#111" />
            <circle cx="20" cy="20" r="3" fill="#111" />
          </svg>
        </div>
        <span class="credit">© QGIS 2018</span>
      </section>
    </main>

    <div class="toolbar plugins">
      <div class="group">
        <span class="handle"></span>
        <button v-for="tool in pluginTools" :key="tool" class="tool" :aria-label="tool">
          <svg viewBox="0 0 22 22" v-html="icons[tool]"></svg>
        </button>
      </div>
    </div>

    <footer class="status">
      <span class="orb"></span>
      <button class="small" aria-label="toggle extents">
        <svg viewBox="0 0 14 14">
          <path d="M3 2q4-1 4 3t-4 2q-2-3 0-5M7 8q4-1 5 2t-3 3q-4-2-2-5" fill="#ccc" stroke="#222" stroke-width="1.3" />
          <path d="M5 4l4 6M10 2L6 7M4 12l3-3" stroke="#222" />
        </svg>
      </button>
      <label class="cell title" for="coordinate">Coordinata:</label>
      <input id="coordinate" v-model="coordinate" class="coordinate" type="text" />
      <label class="cell" for="scale">Scala</label>
      <input id="scale" v-model="scale" class="scale" type="text" />
      <button class="small" aria-label="stop rendering">
        <svg viewBox="0 0 14 14">
          <path d="M13 2L6 13l-4-2" fill="none" stroke="#999" stroke-width="2" />
          <circle cx="5" cy="5" r="3.500" fill="#f6d5d5" stroke="#d33a3a" stroke-width="1.300" />
          <path d="M3 7l4-4" stroke="#d33a3a" />
        </svg>
      </button>
      <label class="cell render"><input v-model="render" type="checkbox" />Aggiorna</label>
      <span class="cell title epsg">EPSG:4326</span>
      <button class="small" aria-label="projection">
        <svg viewBox="0 0 14 14">
          <circle cx="7" cy="7" r="4.500" fill="#ddd" stroke="#999" stroke-width="2.500" />
          <path d="M7 0v4M7 10v4M0 7h4M10 7h4" stroke="#888" stroke-width="1.500" />
        </svg>
      </button>
    </footer>
  </div>
</template>

<style>
body {
  background: #fff;
}
</style>

<style scoped>
.window {
  margin-top: 79px;
  background: #efefef;
  font-family: Roboto, "Open Sans", sans-serif;
  font-size: 10px;
  color: #222;
  overflow: hidden;
}
button {
  padding: 0;
  border: 0;
  background: none;
  font: inherit;
  color: inherit;
}
h1,
h2 {
  margin: 0;
  font: inherit;
}
svg {
  display: block;
}
.titlebar {
  display: flex;
  align-items: center;
  height: 18px;
  border-bottom: 1px solid #bfbfbb;
  background: linear-gradient(100deg, #d5ecc0 0, #f6f6cc 4%, #ffffe0 24%, #f5f5d6 27%, #ffffdc 45%, #f3f3dc 52%, #ffffe4 60%, #ffffe8 100%);
}
.app-icon {
  width: 14px;
  height: 14px;
  margin-right: 3px;
}
.controls {
  display: flex;
  align-self: flex-start;
  margin-left: auto;
  margin-right: 2px;
  border: 1px solid #b9b9a6;
  border-top: 0;
  border-radius: 0 0 4px 4px;
}
.controls button {
  display: flex;
  align-items: center;
  justify-content: center;
  width: 23px;
  height: 14px;
}
.controls button + button {
  border-left: 1px solid #c9c9b6;
}
.controls .wide {
  width: 38px;
}
.controls svg {
  width: 11px;
  height: 11px;
}
.menubar {
  display: flex;
  gap: 11px;
  height: 19px;
  padding-left: 9px;
  border-bottom: 1px solid #c9c9c9;
}
.toolbar {
  display: flex;
  height: 31px;
  border-bottom: 1px solid #c4c4c4;
  box-shadow: inset 0 1px #f9f9f9;
}
.menubar + .toolbar {
  height: 32px;
}
.group {
  display: flex;
  align-items: center;
}
.handle {
  width: 13px;
  height: 24px;
  background: radial-gradient(circle at 1px 1px, #c9c9c9 1px, transparent 1px) 5px 0 / 4px 4px;
  clip-path: inset(0 3px 0 5px);
}
.group:first-child .handle {
  width: 10px;
  clip-path: inset(0 1px 0 4px);
}
.separator {
  width: 1px;
  height: 24px;
  margin: 0 1px;
  background: #c2c2c2;
}
.tool {
  display: flex;
  align-items: center;
  justify-content: center;
  width: 29px;
  height: 28px;
  border: 1px solid transparent;
}
.tool svg {
  width: 20px;
  height: 20px;
}
.tool.hover {
  border-color: #a9a9a9;
  border-radius: 2px;
  background: #f8f8f8;
}
.tool.pressed {
  border-color: #8f8f8f;
  border-radius: 2px;
  background: #d2d2d2;
}
.arrow {
  width: 10px;
  height: 5px;
  background: #111;
  clip-path: polygon(10% 0, 90% 0, 50% 100%);
}
.arrow.off {
  background: #999;
}
.workspace {
  display: flex;
  height: 449px;
  padding-top: 1px;
}
.dock {
  display: flex;
  flex-direction: column;
  width: 219px;
}
.dock-title {
  display: flex;
  align-items: center;
  gap: 1px;
  height: 17px;
  padding-right: 1px;
}
.dock-title h2 {
  padding: 0 4px;
  font-size: 9px;
}
.grip {
  flex: 1;
  height: 6px;
  background: radial-gradient(circle at 1px 1px, #cdcdcd 1px, transparent 1px) 0 0 / 4px 3px;
}
.dock-title button {
  display: flex;
  align-items: center;
  justify-content: center;
  width: 12px;
  height: 12px;
  border: 1px solid #999;
  border-radius: 2px;
}
.dock-title svg {
  width: 8px;
  height: 8px;
}
.tree {
  flex: 1;
  margin: 0;
  padding: 0;
  border: 1px solid #b5b5b5;
  background: #fff;
  list-style: none;
}
.tree li {
  height: 30px;
  background: linear-gradient(#ccc, #ccc) 8px 0 / 1px 100% no-repeat;
}
.tree li:last-child {
  background-size: 1px 8px;
}
.layer {
  display: flex;
  align-items: center;
  height: 17px;
  padding-left: 5px;
  font: bold 11px/17px Roboto, Arial, sans-serif;
  color: #1d1d1d;
}
.expander {
  box-sizing: border-box;
  width: 8px;
  height: 8px;
  margin-right: 7px;
  border: 1px solid #999;
  background: linear-gradient(#666, #666) center / 4px 1px no-repeat #fff;
}
input[type="checkbox"] {
  appearance: none;
  display: flex;
  align-items: center;
  justify-content: center;
  width: 11px;
  height: 11px;
  margin: 0;
  background: #e3e3e3;
}
input[type="checkbox"]:checked::before {
  content: "✖";
  font: 10px/11px "DejaVu Sans", sans-serif;
  color: #000;
}
.line-icon {
  width: 16px;
  height: 16px;
  margin: 0 6px 0 5px;
}
.symbol {
  display: flex;
  align-items: center;
  gap: 2px;
  height: 13px;
  padding-left: 26px;
}
.elbow {
  width: 8px;
  height: 6px;
  margin-bottom: 6px;
  border-left: 1px solid #ccc;
  border-bottom: 1px solid #ccc;
}
.symbol svg {
  width: 13px;
  height: 2px;
}
.canvas {
  position: relative;
  flex: 1;
  margin-left: 6px;
  border: 1px solid #b5b5b5;
  border-right: 0;
  background: #fff;
}
.map {
  width: 100%;
  height: 100%;
}
.map path {
  fill: none;
  stroke-width: 6;
  stroke-linejoin: round;
  stroke-linecap: round;
}
.map .minor {
  stroke: #8f63c4;
}
.map .main {
  stroke: #7a1bb6;
}
.map .dark {
  stroke: #2d1458;
  stroke-width: 7;
}
.map .channel {
  stroke: #26347c;
  stroke-width: 4;
}
.map .pale {
  stroke: #d6dcf6;
  stroke-width: 7;
}
.map .aqua {
  stroke: #b8f3ec;
}
.map .bank {
  stroke: #5e8a5a;
}
.map .flood {
  stroke: #f24a92;
}
.scalebar {
  position: absolute;
  top: 4px;
  right: 15px;
  width: 219px;
}
.numbers {
  display: flex;
  justify-content: space-between;
  margin: 0 15px 0 -4px;
  font: 11px/12px Roboto, Arial, sans-serif;
}
.rule {
  width: 187px;
  height: 6px;
  border: 2px solid #222;
  border-bottom: 0;
}
.unit {
  position: absolute;
  right: 0;
  top: 12px;
  line-height: 10px;
}
.north {
  position: absolute;
  left: 7px;
  bottom: 5px;
  width: 40px;
  text-align: center;
  font: bold 8px/10px "Liberation Sans", Arial, sans-serif;
}
.north svg {
  width: 40px;
  height: 40px;
}
.credit {
  position: absolute;
  right: 8px;
  bottom: 7px;
}
.status {
  display: flex;
  align-items: center;
  justify-content: flex-end;
  gap: 2px;
  height: 24px;
  font-size: 10px;
  line-height: 16px;
}
.orb {
  align-self: flex-end;
  width: 20px;
  height: 4px;
  margin: 0 auto 0 13px;
  border-top: 1px solid #587890;
  border-radius: 50% 50% 0 0;
  background: #ccd8e4;
}
.small {
  display: flex;
  align-items: center;
  justify-content: center;
  width: 19px;
  height: 18px;
  border: 1px solid #999;
}
.small svg {
  width: 14px;
  height: 14px;
}
.cell {
  box-sizing: border-box;
  height: 18px;
  padding: 0 4px;
  border: 1px solid #b4b4b4;
  text-align: center;
}
.cell.title {
  width: 62px;
}
.status input[type="text"] {
  box-sizing: border-box;
  height: 18px;
  padding: 0 3px;
  border: 2px solid #b4b4b4;
  background: #fff;
  font: inherit;
  color: #222;
}
.status .coordinate {
  width: 252px;
  text-align: center;
}
.status .scale {
  width: 87px;
}
.cell.render {
  display: flex;
  align-items: center;
  gap: 4px;
  width: 65px;
  padding: 0 0 0 1px;
}
.epsg {
  color: #999;
}
</style>
